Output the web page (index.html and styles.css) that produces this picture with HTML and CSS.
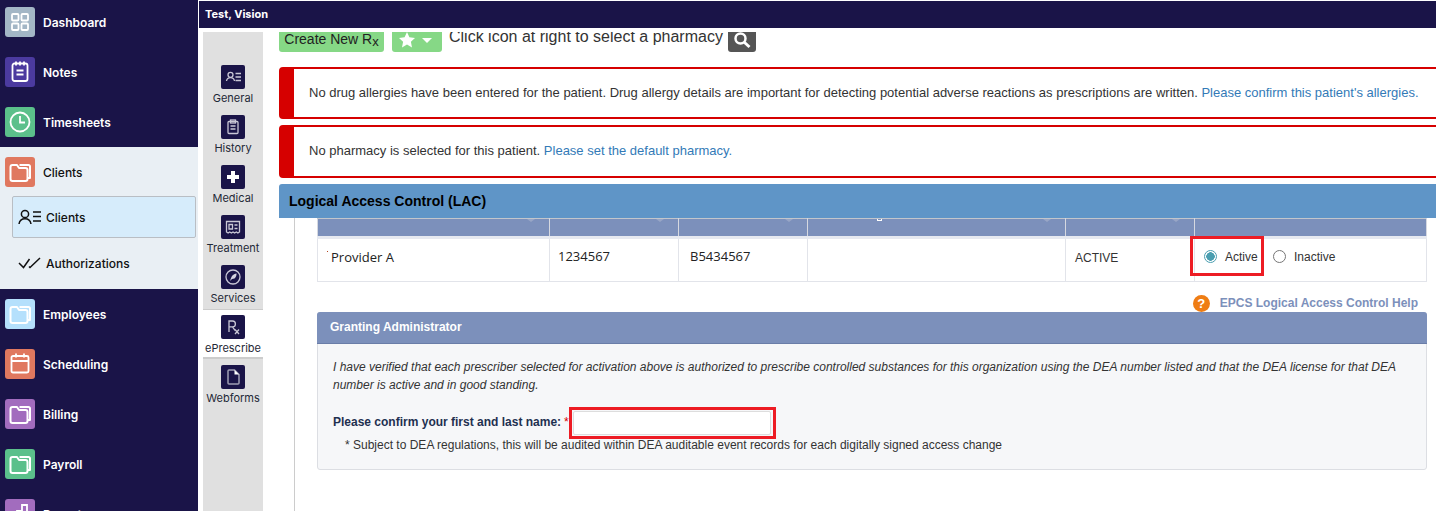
FILE: index.html
```html
<!DOCTYPE html>
<html>
<head>
	<title>ePrescribe - Logical Access Control</title>
	<meta charset="utf-8">
	<link rel="stylesheet" href="styles.css">
</head>
<body>
<div class="app">
	<div class="sidebar">
		<a class="nav_item"><span class="nav_icon ic_grey"><svg viewBox="0 0 30 30"><g class="ln"><rect x="7" y="7" width="6.500" height="6.500" rx="1"/><rect x="16.500" y="7" width="6.500" height="6.500" rx="1"/><rect x="7" y="16.500" width="6.500" height="6.500" rx="1"/><rect x="16.500" y="16.500" width="6.500" height="6.500" rx="1"/></g></svg></span>Dashboard</a>
		<a class="nav_item"><span class="nav_icon ic_indigo"><svg viewBox="0 0 30 30"><g class="ln"><rect x="7.500" y="6.500" width="15" height="17.500" rx="2"/><path d="M11 4.500v4M15 4.500v4M19 4.500v4M11.500 13.500h7M11.500 17.500h7"/></g></svg></span>Notes</a>
		<a class="nav_item"><span class="nav_icon ic_green"><svg viewBox="0 0 30 30"><g class="ln"><circle cx="15" cy="15" r="9.500"/><path d="M15 9v6.500h5"/></g></svg></span>Timesheets</a>
		<div class="nav_group">
			<a class="nav_item nav_open"><span class="nav_icon ic_coral"><svg viewBox="0 0 30 30"><use href="#folder"/></svg></span>Clients</a>
			<a class="sub_item sub_active"><svg class="sub_icon" viewBox="0 0 24 16"><g class="ln_dark"><circle cx="7" cy="5" r="3.600"/><path d="M1 15c.6-3.600 3-5.200 6-5.200s5.400 1.600 6 5.200M15 3h8M15 7.500h8M15 12h8"/></g></svg>Clients</a>
			<a class="sub_item sub_plain"><svg class="sub_icon" viewBox="0 0 24 16"><g class="ln_dark"><path d="M1 8l4.500 4.500L11.500 4M11 11.500l1 1L22 3"/></g></svg>Authorizations</a>
		</div>
		<a class="nav_item"><span class="nav_icon ic_sky"><svg viewBox="0 0 30 30"><use href="#folder"/></svg></span>Employees</a>
		<a class="nav_item"><span class="nav_icon ic_coral"><svg viewBox="0 0 30 30"><g class="ln"><rect x="6.500" y="7" width="17" height="16.500" rx="1.500"/><path d="M6.500 12h17M11 4.500v4M19 4.500v4"/></g></svg></span>Scheduling</a>
		<a class="nav_item"><span class="nav_icon ic_purple"><svg viewBox="0 0 30 30"><use href="#folder"/></svg></span>Billing</a>
		<a class="nav_item"><span class="nav_icon ic_green"><svg viewBox="0 0 30 30"><use href="#folder"/></svg></span>Payroll</a>
		<a class="nav_item"><span class="nav_icon ic_purple"><svg viewBox="0 0 30 30"><g class="ln"><path d="M7 23v-6h5v6M12 23V12h5v11M17 23V6h5v17"/></g></svg></span>Reports</a>
	</div>

	<div class="main">
		<div class="patient_bar">Test, Vision</div>
		<div class="main_body">
			<div class="tabs">
				<a class="tab"><span class="tab_icon"><svg viewBox="0 0 24 24"><g class="ln_tab"><circle cx="9.500" cy="9.800" r="2.500"/><path d="M5.500 16c.4-2.400 2-3.400 4-3.400s3.600 1 4 3.400M14.500 8.500h5.500M14.500 12h5.500M14.500 15.500h5.500"/></g></svg></span>General</a>
				<a class="tab"><span class="tab_icon"><svg viewBox="0 0 24 24"><g class="ln_tab"><rect x="7" y="6.500" width="10" height="12" rx="1"/><rect x="9.500" y="5" width="5" height="3"/><path d="M9.500 11h5M9.500 14h5"/></g></svg></span>History</a>
				<a class="tab"><span class="tab_icon"><svg viewBox="0 0 24 24"><path class="solid" d="M10 6h4v4h4v4h-4v4h-4v-4H6v-4h4z"/></svg></span>Medical</a>
				<a class="tab"><span class="tab_icon"><svg viewBox="0 0 24 24"><g class="ln_tab"><path d="M5.500 6.500h13v10.500l-1.600 1-1.600-1-1.700 1-1.600-1-1.600 1-1.700-1-1.600 1-1.600-1z"/><path d="M8 9.500h3.500v4.500H8zM13.500 10h3M13.500 13.500h3"/></g></svg></span>Treatment</a>
				<a class="tab"><span class="tab_icon"><svg viewBox="0 0 24 24"><circle class="ln_tab" cx="12" cy="12" r="7"/><path class="solid_dim" d="M15.500 8.500c.2 2-.6 3.800-2 5l-2.500.5-2 2 1-3 1-2c1.300-1.500 3-2.300 4.500-2.500z"/></svg></span>Services</a>
				<a class="tab tab_active"><span class="tab_icon"><svg viewBox="0 0 24 24"><g class="ln_tab"><path d="M8 17V6h3.500a2.900 2.900 0 0 1 0 5.800H8M11.500 11.800l2.500 3.500M14 14.500l4 4.500M18 14.500l-4 4.500"/></g></svg></span>ePrescribe</a>
				<a class="tab"><span class="tab_icon"><svg viewBox="0 0 24 24"><g class="ln_doc"><path d="M7 6a1 1 0 0 1 1-1h5.500L18 9.500V18a1 1 0 0 1-1 1H8a1 1 0 0 1-1-1z"/></g><path class="solid" d="M13.500 5v4.500H18z"/></svg></span>Webforms</a>
			</div>

			<div class="content">
				<div class="toolbar">
					<a class="btn_green btn_create">Create New R<sub>x</sub></a>
					<a class="btn_green btn_fav"><svg width="18" height="18" viewBox="0 0 18 18"><path class="solid" d="M9 1l2.400 5.200 5.600.7-4.100 3.900 1.100 5.600L9 13.600 4 16.400l1.100-5.600L1 6.900l5.600-.7z"/></svg><span class="caret"></span></a>
					<span class="toolbar_text">Click icon at right to select a pharmacy</span>
					<a class="btn_search"><svg width="18" height="18" viewBox="0 0 18 18"><circle cx="7.500" cy="7.500" r="5" fill="none" stroke="#fff" stroke-width="2.500"/><path d="M11.500 11.500l5 4.500" stroke="#fff" stroke-width="3"/></svg></a>
				</div>

				<div class="alert">No drug allergies have been entered for the patient. Drug allergy details are important for detecting potential adverse reactions as prescriptions are written. <a class="link">Please confirm this patient's allergies.</a></div>
				<div class="alert alert_tall">No pharmacy is selected for this patient. <a class="link">Please set the default pharmacy.</a></div>

				<div class="lac_title">Logical Access Control (LAC)</div>
				<div class="lac_body">
					<table class="lac_table">
						<tr class="lac_head"><th class="col_name sortable"></th><th class="col_num sortable"></th><th class="col_num sortable"></th><th class="col_wide sortable"><span class="clipped_label"></span></th><th class="col_num sortable"></th><th></th></tr>
						<tr class="lac_row">
							<td class="prov">Provider A</td>
							<td class="num">1234567</td>
							<td class="num num2">B5434567</td>
							<td></td>
							<td class="status">ACTIVE</td>
							<td class="status radios">
								<label class="radio_lbl"><span class="radio radio_on"></span>Active</label>
								<label class="radio_lbl"><span class="radio"></span>Inactive</label>
								<span class="mark mark_radio"></span>
							</td>
						</tr>
					</table>

					<div class="help_line"><span class="help_icon">?</span><a class="help_link">EPCS Logical Access Control Help</a></div>

					<div class="panel">
						<div class="panel_head">Granting Administrator</div>
						<div class="panel_body">
							<p class="attest">I have verified that each prescriber selected for activation above is authorized to prescribe controlled substances for this organization using the DEA number listed and that the DEA license for that DEA number is active and in good standing.</p>
							<div class="confirm">
								<span class="confirm_lbl">Please confirm your first and last name:</span><span class="req">*</span>
								<span class="name_wrap"><input class="name_input" type="text"></span>
							</div>
							<div class="footnote">* Subject to DEA regulations, this will be audited within DEA auditable event records for each digitally signed access change</div>
						</div>
					</div>
				</div>
			</div>
		</div>
	</div>
</div>

<svg class="defs" width="0" height="0"><symbol id="folder" viewBox="0 0 30 30"><g fill="none" stroke="#fff" stroke-width="2" stroke-linejoin="round"><path d="M5.500 22V10a2 2 0 0 1 2-2h4.500l2 3h6.500a2 2 0 0 1 2 2v9a2 2 0 0 1-2 2h-13a2 2 0 0 1-2-2z"/><path d="M14.500 8h9a1.500 1.500 0 0 1 1.500 1.500V21h-2.500"/></g></symbol></svg>
</body>
</html>
```
FILE: styles.css
```css
html, body {
	margin: 0;
	padding: 0;
	height: 511px;
	overflow: hidden;
	background: #fff;
}

.app {
	display: flex;
	height: 511px;
	font-family: "Liberation Sans", Arial, sans-serif;
}

.defs { position: absolute; }

/* left nav */
.sidebar {
	width: 198px;
	flex: none;
	height: 511px;
	overflow: hidden;
	background: #1a1448;
}

.nav_item {
	display: flex;
	align-items: center;
	gap: 8px;
	height: 30px;
	padding: 7px 0 13px 5px;
	color: #fff;
	font: 600 12px Inter, sans-serif;
}

.nav_icon {
	width: 30px;
	height: 30px;
	border-radius: 3px;
	flex: none;
}

.nav_icon svg { display: block; width: 30px; height: 30px; }

.ic_grey { background: #a3b6c6; }
.ic_indigo { background: #4b3a9f; }
.ic_green { background: #5bc08b; }
.ic_coral { background: #e0785f; }
.ic_sky { background: #b5e0fc; }
.ic_purple { background: #a26cbe; }

.ln { fill: none; stroke: #fff; stroke-width: 1.800; }
.ln_dark { fill: none; stroke: #111; stroke-width: 1.500; }
.ln_tab { fill: none; stroke: #c9c7d6; stroke-width: 1.300; }
.ln_doc { fill: none; stroke: #a09eb4; stroke-width: 1.500; }
.solid { fill: #fff; }
.solid_dim { fill: #d5d3e0; }

.nav_group {
	height: 142px;
	margin: -3px 0 3px;
	background: #e9eff4;
}

.nav_open {
	color: #111;
	font-weight: 500;
	padding-top: 10px;
	padding-bottom: 9px;
}

.sub_item {
	display: flex;
	align-items: center;
	font: 500 12px Inter, sans-serif;
	color: #111;
}

.sub_icon { width: 24px; height: 16px; flex: none; margin-right: 4px; }

.sub_active {
	box-sizing: border-box;
	width: 184px;
	height: 42px;
	margin-left: 12px;
	padding-left: 5px;
	background: #d6ecfb;
	border: 1px solid #b9bec4;
	border-radius: 2px;
}

.sub_plain {
	height: 42px;
	margin-top: 4px;
	padding-left: 18px;
}

/* patient bar + tabs */
.main {
	flex: 1;
	min-width: 0;
	margin-left: 1px;
	padding-top: 1px;
}

.patient_bar {
	height: 27px;
	padding-left: 6px;
	background: #1a1448;
	color: #fff;
	font: bold 11px/27px Inter, sans-serif;
}

.main_body {
	display: flex;
	height: 483px;
}

.tabs {
	width: 60px;
	flex: none;
	margin: 4px 0 0 4px;
	padding-top: 27px;
	background: #e0e0e0;
}

.tab {
	display: flex;
	flex-direction: column;
	align-items: center;
	box-sizing: border-box;
	height: 50px;
	padding-top: 6px;
	color: #1f2937;
	font: 11px Inter, sans-serif;
}

.tab_active { background: #fff; border-bottom: 2px solid #ccc; border-top: 1px solid #ccc; padding-top: 5px; }

.tab_icon {
	width: 24px;
	height: 24px;
	margin-bottom: 2px;
	border-radius: 2px;
	background: #1a1448;
}

.tab_icon svg { display: block; width: 24px; height: 24px; }

/* content */
.content {
	flex: 1;
	min-width: 0;
	padding: 4px 0 0 16px;
	overflow: hidden;
}

.toolbar {
	display: flex;
	align-items: flex-end;
	height: 20px;
	overflow: hidden;
}

.btn_green {
	display: flex;
	align-items: center;
	justify-content: center;
	flex: none;
	box-sizing: border-box;
	height: 30px;
	background: #86d886;
	border-radius: 3px;
	color: #222;
	font-size: 14px;
}

.btn_green sub { font-size: 13px; line-height: 0; position: relative; top: 3px; }

.btn_create { width: 105px; padding-top: 4px; }

.btn_fav { width: 50px; margin-left: 8px; gap: 6px; padding: 6px 4px 0 0; }

.caret {
	width: 0;
	height: 0;
	border-left: 5px solid transparent;
	border-right: 5px solid transparent;
	border-top: 5px solid #fff;
}

.toolbar_text {
	flex: none;
	margin: 0 5px 5px 7px;
	color: #333;
	font-size: 16px;
	line-height: 20px;
	white-space: nowrap;
}

.btn_search {
	display: flex;
	align-items: center;
	justify-content: center;
	box-sizing: border-box;
	width: 28px;
	height: 30px;
	padding-top: 6px;
	background: #555;
	border-radius: 3px;
}

.alert {
	box-sizing: border-box;
	margin-top: 15px;
	height: 52px;
	width: 1165px;
	padding-left: 15px;
	background: #fff;
	border: 2px solid #d60000;
	border-left-width: 15px;
	border-radius: 4px;
	color: #333;
	font-size: 13px;
	line-height: 47px;
	white-space: nowrap;
}

.alert_tall { margin-top: 6px; height: 53px; }

.link { color: #337ab7; }

.lac_title {
	margin-top: 6px;
	height: 34px;
	padding-left: 10px;
	background: #5f95c7;
	border-radius: 3px 0 0 0;
	color: #000;
	font: bold 14px/34px "Liberation Sans", Arial, sans-serif;
}

.lac_body {
	height: 300px;
	margin-left: 15px;
	padding-left: 22px;
	border-left: 1px solid #ccc;
}

.lac_table {
	width: 1110px;
	border-collapse: collapse;
	table-layout: fixed;
	font-size: 12px;
	color: #333;
}

.lac_head th {
	position: relative;
	height: 17px;
	padding: 0;
	background: #7c90bb;
	border: 1px solid #d5d8e0;
	border-top: 1px solid #c2c6cc;
}

.sortable::after {
	content: "";
	position: absolute;
	top: 0;
	right: 14px;
	border-left: 4px solid transparent;
	border-right: 4px solid transparent;
	border-top: 3px solid #98a6c6;
}

.clipped_label {
	position: absolute;
	top: 0;
	left: 69px;
	width: 3px;
	height: 1px;
	border: 1px solid #fff;
	border-top: 0;
}

.lac_row td {
	height: 34px;
	padding: 0 0 6px;
	border: 1px solid #e2e4ea;
	border-top: 3px solid #e6e9f0;
}

.col_name { width: 231px; }
.col_num { width: 128px; }
.col_wide { width: 257px; }

.prov, .num {
	font-family: "Open Sans", sans-serif;
	color: #222;
	font-size: 13px;
}

.lac_row .prov { position: relative; padding-left: 13px; }

.lac_row .prov::before {
	content: "";
	position: absolute;
	left: 9px;
	top: 12px;
	width: 1px;
	height: 1px;
	background: #b5441f;
}

.lac_row .num { padding: 0 0 8px 8px; }
.lac_row .num2 { padding-left: 11px; }
.lac_row .status { padding: 0 0 4px 9px; }

.lac_row .radios {
	position: relative;
	padding-left: 9px;
}

.radio_lbl {
	display: inline-flex;
	align-items: center;
	gap: 8px;
	margin-right: 12px;
}

.radio {
	box-sizing: border-box;
	width: 13px;
	height: 13px;
	margin-top: -2px;
	border: 1px solid #767676;
	border-radius: 50%;
	background: #fff;
}

.radio_on {
	border-color: #4a9eb0;
	background: radial-gradient(circle, #4a9eb0 0 4px, #fff 4.500px);
}

/* red review marks lying over the form */
.mark {
	position: absolute;
	box-sizing: border-box;
	border: 3px solid #ed1c24;
}

.mark_radio {
	left: -5px;
	top: -3px;
	width: 74px;
	height: 40px;
}

.help_line {
	display: flex;
	align-items: center;
	justify-content: flex-end;
	box-sizing: border-box;
	width: 1110px;
	height: 30px;
	padding-top: 12px;
}

.help_icon {
	width: 17px;
	height: 17px;
	margin-right: 10px;
	border-radius: 50%;
	background: #ef7d14;
	color: #fff;
	font: bold 13px/17px "Liberation Sans", Arial, sans-serif;
	text-align: center;
}

.help_link {
	margin-right: 9px;
	color: #7c90bb;
	font-size: 12px;
	font-weight: bold;
}

.panel {
	box-sizing: border-box;
	width: 1110px;
	height: 158px;
	background: #f6f7f9;
	border: 1px solid #dcdee3;
	border-radius: 3px;
}

.panel_head {
	height: 31px;
	margin: -1px -1px 0;
	padding-left: 13px;
	background: #7c90bb;
	border-radius: 3px 3px 0 0;
	border-bottom: 1px solid #6a7da8;
	color: #fff;
	font: bold 12px/31px "Liberation Sans", Arial, sans-serif;
}

.panel_body {
	padding: 14px 15px 0;
	font-size: 12px;
	color: #333;
}

.attest {
	margin: 0;
	font-style: italic;
	line-height: 18px;
}

.confirm {
	display: flex;
	align-items: center;
	margin-top: 12px;
	height: 32px;
}

.confirm_lbl { font-weight: bold; color: #1f3050; }
.req { margin-left: 3px; color: #d60000; }

.name_wrap {
	box-sizing: border-box;
	display: block;
	width: 207px;
	height: 32px;
	margin-top: 1px;
	padding: 1px 2px 1px 1px;
	border: 3px solid #ed1c24;
}

.name_input {
	display: block;
	box-sizing: border-box;
	width: 100%;
	height: 100%;
	border: 1px solid #ddd;
	border-radius: 2px;
	background: #fff;
	padding: 0;
}

.footnote {
	padding-left: 12px;
}
```
